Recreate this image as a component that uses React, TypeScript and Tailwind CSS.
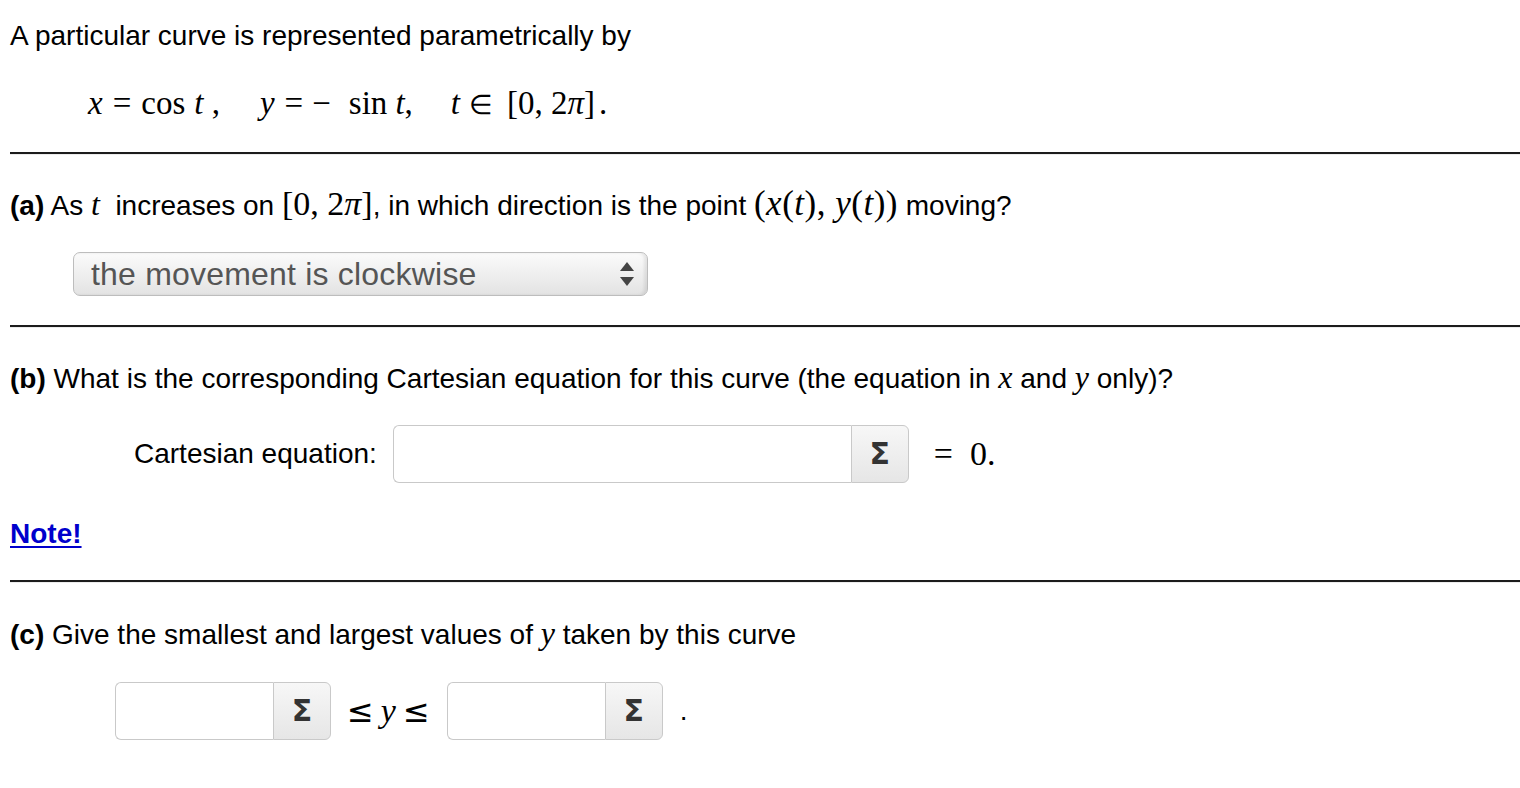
import React from 'react';

const sans = { fontFamily: '"Liberation Sans", Arial, Helvetica, sans-serif' };

function M({ children, className = '' }: { children: React.ReactNode; className?: string }) {
  return <span className={`font-['Liberation_Serif','Times_New_Roman',serif] ${className}`}>{children}</span>;
}

function I({ children }: { children: React.ReactNode }) {
  return <span className="italic">{children}</span>;
}

function Rule() {
  return <div className="border-t-2 border-[#1c1c1c] border-b border-b-[#ececec]" />;
}

function Sigma() {
  return (
    <button className="w-[58px] h-full flex items-center justify-center border border-[#c9c9c9] rounded-r-[6px] bg-gradient-to-b from-[#f7f7f7] to-[#e6e6e6] text-[#333] font-bold text-[30px] font-['DejaVu_Sans',sans-serif]">
      Σ
    </button>
  );
}

function MathInput({ width }: { width: string }) {
  return (
    <div className="flex h-[58px]">
      <div className={`${width} h-full border border-r-0 border-[#c9c9c9] rounded-l-[6px] bg-white`} />
      <Sigma />
    </div>
  );
}

export default function App() {
  return (
    <div className="bg-white min-h-screen pl-[10px] text-black text-[28px] leading-[30px]" style={sans}>
      <p className="pt-[21px] h-[51px]">A particular curve is represented parametrically by</p>

      <div className="mt-[35px] ml-[78px] flex items-baseline h-[34px] leading-[34px] text-[33px]">
        <M><I>x</I></M>
        <M className="ml-[10px]">=</M>
        <M className="ml-[10px]">cos</M>
        <M className="ml-[9px]"><I>t</I> ,</M>
        <M className="ml-[40px]"><I>y</I></M>
        <M className="ml-[10px]">=</M>
        <M className="ml-[9px]">−</M>
        <M className="ml-[18px]">sin</M>
        <M className="ml-[8px]"><I>t</I>,</M>
        <M className="ml-[38px]"><I>t</I></M>
        <M className="ml-[9px] text-[27px]">∈</M>
        <M className="ml-[14px]">[0, 2<I>π</I>]</M>
        <M className="ml-[4px]">.</M>
      </div>

      <div className="mt-[32px]"><Rule /></div>

      <p className="mt-[34px] h-[30px] flex items-baseline whitespace-pre">
        <span className="font-bold">(a)</span>
        <span> As </span>
        <M className="text-[32px]"><I>t</I></M>
        <span>  increases on </span>
        <M className="text-[34px]">[0, 2<I>π</I>]</M>
        <span>, in which direction is the point </span>
        <M className="text-[35px] tracking-[0.5px]">(<I>x</I>(<I>t</I>), <I>y</I>(<I>t</I>))</M>
        <span> moving?</span>
      </p>

      <div className="mt-[33px] ml-[63px] w-[575px] h-[44px] flex items-center justify-between pl-[17px] pr-[12px] border border-[#bdbdbd] rounded-[7px] bg-gradient-to-b from-[#fbfbfb] to-[#e3e3e3] shadow-[inset_-3px_0_3px_rgba(0,0,0,0.08)]">
        <span className="text-[#555] text-[32px] leading-none tracking-[0.2px]">the movement is clockwise</span>
        <svg width="16" height="26" viewBox="0 0 16 26">
          <path d="M8 1 L15 10 L1 10 Z" fill="#444" />
          <path d="M1 16 L15 16 L8 25 Z" fill="#444" />
        </svg>
      </div>

      <div className="mt-[29px]"><Rule /></div>

      <p className="mt-[34px] h-[30px] flex items-baseline whitespace-pre">
        <span className="font-bold">(b)</span>
        <span> What is the corresponding Cartesian equation for this curve (the equation in </span>
        <M className="text-[32px]"><I>x</I></M>
        <span> and </span>
        <M className="text-[32px]"><I>y</I></M>
        <span> only)?</span>
      </p>

      <div className="mt-[33px] ml-[124px] flex items-center h-[58px]">
        <span>Cartesian equation:</span>
        <div className="ml-[16px] flex h-[58px]">
          <div className="w-[458px] h-full border border-r-0 border-[#c9c9c9] rounded-l-[6px] bg-white" />
          <Sigma />
        </div>
        <M className="ml-[25px] text-[34px] whitespace-pre">=  0.</M>
      </div>

      <p className="mt-[36px] h-[30px]">
        <a href="#" className="font-bold text-[#0000cc] underline underline-offset-[3px]">Note!</a>
      </p>

      <div className="mt-[31px]"><Rule /></div>

      <p className="mt-[35px] h-[30px] flex items-baseline whitespace-pre">
        <span className="font-bold">(c)</span>
        <span> Give the smallest and largest values of </span>
        <M className="text-[32px]"><I>y</I></M>
        <span> taken by this curve</span>
      </p>

      <div className="mt-[34px] ml-[105px] flex items-center h-[58px]">
        <MathInput width="w-[158px]" />
        <span className="ml-[16px] text-[32px] font-['DejaVu_Sans',sans-serif]">≤</span>
        <M className="ml-[7px] text-[34px]"><I>y</I></M>
        <span className="ml-[7px] text-[32px] font-['DejaVu_Sans',sans-serif]">≤</span>
        <div className="ml-[17px]">
          <MathInput width="w-[158px]" />
        </div>
        <span className="ml-[17px]">.</span>
      </div>
    </div>
  );
}
